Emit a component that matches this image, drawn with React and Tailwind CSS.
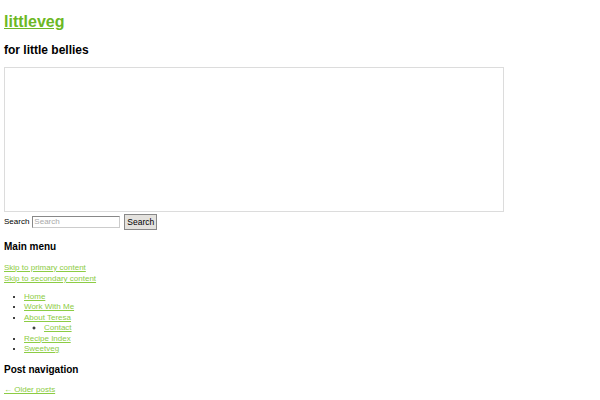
export default function App() {
  const font = { fontFamily: '"Liberation Sans", Arial, sans-serif' }
  return (
    <div className="min-h-[400px] bg-white px-1 text-black" style={font}>
      <h1 className="pt-[11px] text-[16px] font-bold leading-[22px]">
        <a href="#" className="text-[#6cb824] underline">littleveg</a>
      </h1>
      <h2 className="mt-[9px] text-[12px] font-bold leading-[16px]">for little bellies</h2>
      <div className="mt-[9px] h-[145px] w-[500px] border border-[#dcdcdc]"></div>
      <form className="mt-[2px] flex items-center gap-[3px] text-[8px]" onSubmit={e => e.preventDefault()}>
        <label>Search</label>
        <input
          placeholder="Search"
          className="h-[12px] w-[88px] border border-[#888] border-r-[#ccc] border-b-[#ccc] px-[1px] text-[8px] placeholder:text-[#aaa]"
        />
        <button className="ml-[1px] h-[16px] border border-[#888] bg-[#e4e2de] px-[2px] text-[8.5px]">Search</button>
      </form>
      <h3 className="mt-[10px] text-[10px] font-bold leading-[14px]">Main menu</h3>
      <div className="mt-[8px] text-[8px] leading-[11px]">
        <div><a href="#" className="text-[#8ccc44] underline">Skip to primary content</a></div>
        <div><a href="#" className="text-[#8ccc44] underline">Skip to secondary content</a></div>
      </div>
      <ul className="mt-[8px] list-disc pl-[20px] text-[8px] leading-[10.4px]">
        <li><a href="#" className="text-[#8ccc44] underline">Home</a></li>
        <li><a href="#" className="text-[#8ccc44] underline">Work With Me</a></li>
        <li>
          <a href="#" className="text-[#8ccc44] underline">About Teresa</a>
          <ul className="list-[circle] pl-[20px]">
            <li><a href="#" className="text-[#8ccc44] underline">Contact</a></li>
          </ul>
        </li>
        <li><a href="#" className="text-[#8ccc44] underline">Recipe Index</a></li>
        <li><a href="#" className="text-[#8ccc44] underline">Sweetveg</a></li>
      </ul>
      <h3 className="mt-[9px] text-[10px] font-bold leading-[14px]">Post navigation</h3>
      <div className="mt-[7px] text-[8px] leading-[11px]">
        <a href="#" className="text-[#8ccc44] underline">← Older posts</a>
      </div>
    </div>
  )
}
